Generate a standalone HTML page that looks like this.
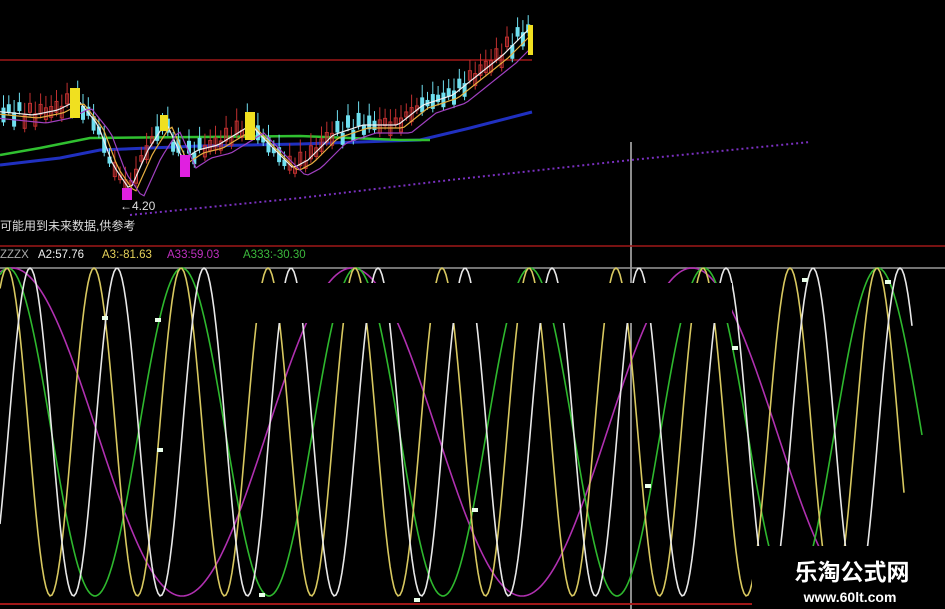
<!DOCTYPE html><html><head><meta charset="utf-8"><style>
html,body{margin:0;padding:0;background:#000;width:945px;height:609px;overflow:hidden}
svg{display:block}
text{font-family:"Liberation Sans","Noto Sans CJK SC",sans-serif}
</style></head><body>
<svg id="s" width="945" height="609" viewBox="0 0 945 609" xmlns="http://www.w3.org/2000/svg">
<rect width="945" height="609" fill="#000"/>
<line x1="0" y1="60" x2="532" y2="60" stroke="#a01818" stroke-width="1.5"/>
<g id="topc"></g>
<line x1="631" y1="142" x2="631" y2="609" stroke="#bbb" stroke-width="1.5"/>
<line x1="0" y1="246" x2="945" y2="246" stroke="#a01818" stroke-width="1.5"/>
<text x="0" y="230" fill="#ddd" font-size="12">可能用到未来数据,供参考</text>
<text x="120" y="210" fill="#ddd" font-size="12">←4.20</text>
<text y="258" font-size="11.5"><tspan x="0" fill="#aaa">ZZZX</tspan><tspan x="38" fill="#eee">A2:57.76</tspan><tspan x="102" fill="#e6d25a">A3:-81.63</tspan><tspan x="167" fill="#c030c0">A33:59.03</tspan><tspan x="243" fill="#3cb83c">A333:-30.30</tspan></text>
<line x1="0" y1="268" x2="945" y2="268" stroke="#999" stroke-width="1.5"/>
<g id="waves"></g>
<rect x="245" y="283" width="487" height="40" fill="#000"/>
<line x1="0" y1="604" x2="945" y2="604" stroke="#a01818" stroke-width="2"/>
<rect x="752" y="546" width="193" height="63" fill="#000"/>
<text x="852" y="580" fill="#fff" font-size="23" font-weight="bold" text-anchor="middle" font-family="'Noto Serif CJK SC','Noto Sans CJK SC',serif">乐淘公式网</text>
<text x="850" y="602" fill="#fff" font-size="14" font-weight="bold" text-anchor="middle" font-family="'Liberation Serif',serif">www.60lt.com</text>
</svg>
<script>
(function(){
var NS="http://www.w3.org/2000/svg";
function el(p,t,a){var e=document.createElementNS(NS,t);for(var k in a)e.setAttribute(k,a[k]);document.getElementById(p).appendChild(e);return e;}
var wTop=268,wBot=596,c=(wTop+wBot)/2,A=(wBot-wTop)/2;
function wave(per,peak,col,end){var d="";for(var x=0;x<=end;x+=2){var y=c-A*Math.cos(2*Math.PI*(x-peak)/per);d+=(x?"L":"M")+x+" "+y.toFixed(1);}el("waves","path",{d:d,fill:"none",stroke:col,"stroke-width":1.6});}
wave(340,12,"#b030b0",860);
wave(174,8,"#2eb82e",922);
wave(87,7,"#d8c860",905);
wave(87,30,"#e8e8e8",912);
[[160,450],[105,318],[262,595],[475,510],[158,320],[417,600],[648,486],[735,348],[805,280],[888,282]].forEach(function(p){el("waves","rect",{x:p[0]-3,y:p[1]-2,width:6,height:4,fill:"#eaffea"});});
var pts=[[0,112],[30,115],[55,110],[75,100],[95,125],[110,165],[127,190],[145,150],[163,122],[180,160],[195,150],[215,145],[248,125],[270,148],[290,168],[305,160],[330,135],[360,125],[395,125],[420,105],[450,95],[475,75],[500,55],[525,30],[532,40]];
function py(x){for(var i=0;i<pts.length-1;i++){if(x<=pts[i+1][0]){var t=(x-pts[i][0])/(pts[i+1][0]-pts[i][0]);return pts[i][1]+t*(pts[i+1][1]-pts[i][1]);}}return 40;}
function line(ps,col,w,dash){var d=ps.map(function(p,i){return(i?"L":"M")+p[0]+" "+p[1]}).join("");var a={d:d,fill:"none",stroke:col,"stroke-width":w};if(dash)a["stroke-dasharray"]=dash;el("topc","path",a);}
line([[0,165],[60,158],[100,150],[200,146],[300,144],[420,140],[470,128],[532,112]],"#2030c0",3);
line([[0,155],[40,148],[90,138],[200,137],[300,136],[400,140],[430,140]],"#30c030",2.5);
line([[130,215],[300,198],[450,180],[631,160],[810,142]],"#7a30c0",2,"2 3");
for(var x=2;x<530;x+=5.3){var y=py(x),r=(Math.sin(x*1.7)+Math.sin(x*0.63))*4;var up=Math.sin(x*2.3)>0;var h=4+Math.abs(Math.sin(x*0.9))*10;var col=up?"#c03030":"#70e0f0";el("topc","line",{x1:x+1.5,y1:y+r-h-6,x2:x+1.5,y2:y+r+h/2+4,stroke:col,"stroke-width":1});el("topc","rect",{x:x,y:y+r-h/2,width:3,height:h,fill:up?"none":col,stroke:col,"stroke-width":1});}
var ma=[];for(var x=0;x<=532;x+=4)ma.push([x,py(x-3).toFixed(1)]);line(ma,"#f0f0f0",1.2);
var ma2=[];for(var x=0;x<=532;x+=4)ma2.push([x,(py(x-8)+3).toFixed(1)]);line(ma2,"#e8b040",1.2);
var ma3=[];for(var x=0;x<=532;x+=4)ma3.push([x,(py(x-16)+8).toFixed(1)]);line(ma3,"#a040c0",1.2);
[[70,88,10,30],[160,115,8,16],[245,112,10,28],[528,25,5,30]].forEach(function(b){el("topc","rect",{x:b[0],y:b[1],width:b[2],height:b[3],fill:"#f0e020"});});
[[122,188,10,12],[180,155,10,22]].forEach(function(b){el("topc","rect",{x:b[0],y:b[1],width:b[2],height:b[3],fill:"#e020e0"});});
})();
</script>
</body></html>
